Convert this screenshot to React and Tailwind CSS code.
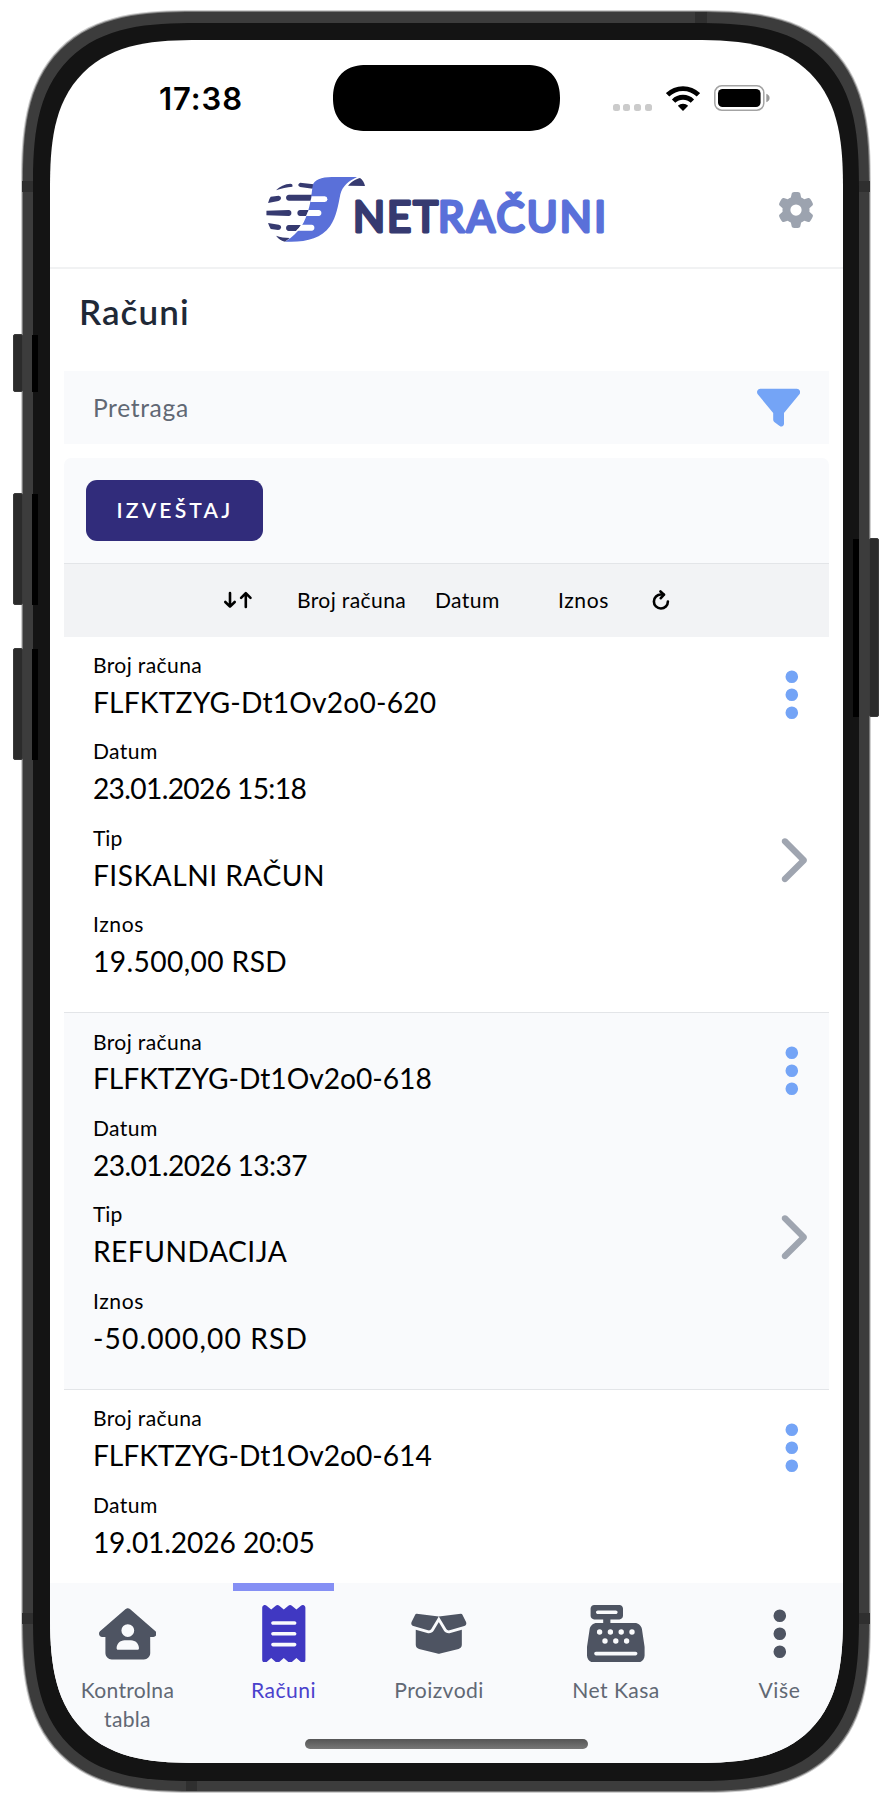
import {
  FaBoxOpen,
  FaCashRegister,
  FaChevronRight,
  FaEllipsisVertical,
  FaFilter,
  FaGear,
  FaHouseUser,
  FaReceipt,
} from "react-icons/fa6";

const receipts = [
  {
    fields: [
      { label: "Broj računa", value: "FLFKTZYG-Dt1Ov2o0-620", track: "tracking-[0.2px]", labelTrack: "tracking-[0.38px]" },
      { label: "Datum", value: "23.01.2026 15:18", track: "tracking-[-0.66px]", labelTrack: "tracking-[0.4px]" },
      { label: "Tip", value: "FISKALNI RAČUN", track: "tracking-[0.48px]", labelTrack: "tracking-[0.02px]" },
      { label: "Iznos", value: "19.500,00 RSD", track: "tracking-[0.4px]", labelTrack: "tracking-[0.6px]" },
    ],
    tone: "bg-white",
  },
  {
    fields: [
      { label: "Broj računa", value: "FLFKTZYG-Dt1Ov2o0-618", track: "tracking-[-0.02px]", labelTrack: "tracking-[0.38px]" },
      { label: "Datum", value: "23.01.2026 13:37", track: "tracking-[-0.6px]", labelTrack: "tracking-[0.4px]" },
      { label: "Tip", value: "REFUNDACIJA", track: "tracking-[0.5px]", labelTrack: "tracking-[0.02px]" },
      { label: "Iznos", value: "-50.000,00 RSD", track: "tracking-[1.11px]", labelTrack: "tracking-[0.6px]" },
    ],
    tone: "bg-[#f9fafc]",
  },
  {
    fields: [
      { label: "Broj računa", value: "FLFKTZYG-Dt1Ov2o0-614", track: "tracking-[-0.02px]", labelTrack: "tracking-[0.38px]" },
      { label: "Datum", value: "19.01.2026 20:05", track: "tracking-[-0.12px]", labelTrack: "tracking-[0.4px]" },
    ],
    tone: "bg-white",
  },
];

const tabs = [
  { label: "Kontrolna tabla", Icon: FaHouseUser, width: "w-[155px] px-7", tint: "text-[#4e5462]", text: "text-[#616874]", track: "tracking-[0.3px]" },
  { label: "Računi", Icon: FaReceipt, width: "w-[157px]", tint: "text-[#4038c2]", text: "text-[#4a41cc]", track: "tracking-[0.47px]", active: true },
  { label: "Proizvodi", Icon: FaBoxOpen, width: "w-[154px]", tint: "text-[#4e5462]", text: "text-[#616874]", track: "tracking-[0.42px]" },
  { label: "Net Kasa", Icon: FaCashRegister, width: "w-[200px]", tint: "text-[#4e5462]", text: "text-[#616874]", track: "tracking-[0.45px]" },
  { label: "Više", Icon: FaEllipsisVertical, width: "w-[127px]", tint: "text-[#4e5462]", text: "text-[#616874]", track: "tracking-[0.6px]" },
];

function StatusBar() {
  return (
    <div className="flex h-[116px] shrink-0 items-start pt-[25px]">
      <div className="flex h-[66px] w-[283px] items-center pl-[109px] pt-[2px] font-['Inter'] text-[31px] font-semibold tracking-[0.9px] text-black">
        17:38
      </div>
      <div className="h-[66px] w-[226.5px] rounded-[40px] bg-black [corner-shape:superellipse(1.2)]" />
      <div className="flex h-[66px] items-center pl-[53px]">
        <div className="flex gap-[3.8px] pt-[18px]">
          {[0, 1, 2, 3].map((n) => (
            <span key={n} className="size-[7px] rounded-[2.5px] bg-[#cbcbcb]" />
          ))}
        </div>
        <svg viewBox="0 0 34 25" className="ml-[14px] h-[25px] w-[34px]">
          <g fill="none" stroke="#000" strokeWidth="4.8">
            <path d="M1.6 8.9 A22 22 0 0 1 32.4 8.9" />
            <path d="M7.6 15.1 A13.4 13.4 0 0 1 26.4 15.1" />
          </g>
          <path d="M17 25 L11.8 19.8 A7.6 7.6 0 0 1 22.2 19.8Z" fill="#000" />
        </svg>
        <svg viewBox="0 0 56 26" className="ml-[14.5px] h-[26px] w-[56px]">
          <rect x="0.8" y="0.8" width="49" height="24.4" rx="7" fill="none" stroke="#a3a3a3" strokeWidth="1.5" />
          <rect x="4" y="4" width="42.6" height="18" rx="4.6" fill="#000" />
          <path d="M52.3 8.8 Q55.6 10 55.6 13 Q55.6 16 52.3 17.2Z" fill="#9a9a9a" />
        </svg>
      </div>
    </div>
  );
}

function Logo() {
  return (
    <svg viewBox="45 30 1060 205" className="h-[68.3px] w-[353.3px]">
      <g fill="#363a70">
        <path d="M78 76 C88 64 105 57 121 56 Q129 56 127 65 C110 67 95 69 78 76Z" />
        <path d="M150 53 L191 58 L188 71 L150 66 Q139 60 150 53Z" />
        <path d="M62 95 L86 92 Q94 94 93 100 Q92 106 85 108 L54 114 Q56 102 62 95Z" />
        <path d="M117 89 H186 L182 107 H117 Q108 106 108 98 Q108 90 117 89Z" />
        <path d="M49 137 L116 135 Q124 136 124 144 Q124 152 116 153 L49 151Z" />
        <path d="M150 135 H176 L169 153 H150 Q142 152 142 144 Q142 136 150 135Z" />
        <path d="M54 174 L86 179 Q94 181 93 188 Q91 195 84 195 L62 192 Q57 184 54 174Z" />
        <path d="M116 180 H153 Q146 192 138 198 H116 Q108 197 108 189 Q108 181 116 180Z" />
        <path d="M78 212 C90 217 105 218 119 219 L105 230 C95 228 85 222 78 212Z" />
        <path d="M294 62 C302 52 316 42 330 39 C338 44 343 54 345 63Z" />
      </g>
      <path
        d="M188 62 C190 45 215 36 245 36 L321 36 C295 49 278 62 271 88 C264 122 260 155 240 184 C212 222 165 233 105 230 C150 203 165 170 175 135 C184 105 184 85 188 62Z"
        fill="#5a70d9"
      />
      <g fill="#fff">
        <path d="M185 94 H224 Q232 95 232 102.5 Q232 110 224 111 H181Z" />
        <path d="M176 135 H206 Q214 136 214 144 Q214 152 206 153 H168Z" />
        <path d="M153 179 H185 Q193 180 193 188 Q193 196 185 197 H138 Q147 190 153 179Z" />
      </g>
      <g className="font-['Lato',sans-serif]" fontSize="126" strokeWidth="9.5" strokeLinejoin="round">
        <text x="309" y="202" letterSpacing="6" fill="#363a70" stroke="#363a70">NET</text>
        <text x="564" y="202" letterSpacing="6.8" fill="#5a70d9" stroke="#5a70d9">RAČUNI</text>
      </g>
    </svg>
  );
}

function SortBar() {
  return (
    <div className="flex h-[74px] shrink-0 items-center border-t-[1.5px] border-[#e3e5e8] bg-[#f2f3f5] pl-[159px] pt-[0.5px] text-[21.1px] leading-7 text-black">
      <svg viewBox="0 0 30 18" className="h-[18px] w-[30px]" fill="none" stroke="#000" strokeWidth="2.6" strokeLinecap="round" strokeLinejoin="round">
        <path d="M7 2 V15.5 M2.3 11 L7 15.7 L11.7 11" />
        <path d="M22.8 16 V2.5 M18.1 6.9 L22.8 2.2 L27.5 6.9" />
      </svg>
      <span className="ml-[43.5px] w-[138px] tracking-[0.38px]">Broj računa</span>
      <span className="w-[123px] tracking-[0.4px]">Datum</span>
      <span className="w-[94px] tracking-[0.6px]">Iznos</span>
      <svg viewBox="0 0 18 20" className="h-5 w-[18px]" fill="none" stroke="#000" strokeWidth="2.6" strokeLinecap="round" strokeLinejoin="round">
        <path d="M15.9 11.5 A7 7 0 1 1 9 4.5 H11.5" />
        <path d="M8.5 1.5 L12 4.7 L8.8 8.2" />
      </svg>
    </div>
  );
}

function ReceiptRow({ receipt }) {
  return (
    <div className={`flex h-[376.7px] shrink-0 justify-between border-b-[1.5px] border-[#e3e5e8] pl-[28.5px] pt-[14.5px] ${receipt.tone}`}>
      <dl className="flex flex-col gap-[13.4px] text-black">
        {receipt.fields.map((field) => (
          <div key={field.label}>
            <dt className={`text-[21.1px] leading-[28.8px] ${field.labelTrack}`}>{field.label}</dt>
            <dd className={`pt-px text-[28.2px] leading-[43.2px] ${field.track}`}>{field.value}</dd>
          </div>
        ))}
      </dl>
      <div className="flex w-[73px] flex-col items-center pt-[14.6px]">
        <FaEllipsisVertical className="size-[57.6px] shrink-0 text-[#74a4f6]" />
        <FaChevronRight className="mr-[1.5px] mt-[111.8px] size-[50.4px] shrink-0 text-[#9fa5b0]" />
      </div>
    </div>
  );
}

function TabBar() {
  return (
    <nav className="h-[180px] shrink-0 bg-[#f9fafc]">
      <div className="flex h-[156px]">
        {tabs.map(({ label, Icon, width, tint, text, track, active }) => (
          <div key={label} className={`flex shrink-0 flex-col items-center ${width}`}>
            <div className={`h-[7.5px] w-[101px] shrink-0 ${active ? "bg-[#858ff4]" : ""}`} />
            <Icon className={`mt-[14px] size-[57.6px] shrink-0 ${tint}`} />
            <span className={`mt-[14px] text-center text-[21.1px] leading-[28.8px] ${text} ${track}`}>{label}</span>
          </div>
        ))}
      </div>
      <div className="mx-auto h-[9.5px] w-[283px] rounded-full bg-linear-to-b from-[#555] to-[#777]" />
    </nav>
  );
}

function SideButton({ place }) {
  return <div className={`absolute w-[10px] rounded-[2px] border border-[#3a3a3a] bg-[#2b2b2b] ${place}`} />;
}

function Mark({ place }) {
  return <div className={`absolute ${place}`} />;
}

export default function App() {
  return (
    <main className="relative h-[1796px] w-[892px] overflow-hidden bg-white pl-[21px] pt-[10px] font-['Lato','Noto_Sans',sans-serif]">
      <SideButton place="left-[12.5px] top-[334px] h-[58px]" />
      <SideButton place="left-[12.5px] top-[493px] h-[112px]" />
      <SideButton place="left-[12.5px] top-[648px] h-[112px]" />
      <SideButton place="left-[869px] top-[538px] h-[179px]" />

      <div className="h-[1783px] w-[850px] rounded-[174px] bg-[#cfcfcf] p-px [corner-shape:superellipse(1.48)]">
        <div className="h-full rounded-[173px] bg-[#7c7c7c] p-px [corner-shape:superellipse(1.48)]">
          <div className="h-full rounded-[172px] bg-[#3c3c3c] px-[10px] pb-[10px] pt-[11px] [corner-shape:superellipse(1.48)]">
            <div className="h-full rounded-[164px] bg-[#141414] pb-[18px] pl-[17px] pr-[16px] pt-[17px] [corner-shape:superellipse(1.48)]">
              <div className="flex h-full flex-col overflow-hidden rounded-[150px] bg-white [corner-shape:superellipse(1.48)]">
                <StatusBar />
                <header className="flex h-[113px] shrink-0 items-start border-b-2 border-[#f1f2f3] pl-[215px] pt-[19px]">
                  <Logo />
                  <FaGear className="ml-[159.7px] mt-[16.5px] size-9 text-[#9ca3af]" />
                </header>
                <div className="flex min-h-0 flex-1 flex-col overflow-hidden px-[14.4px]">
                  <h1 className="h-[102px] shrink-0 pl-[14.5px] pt-[22px] text-[35px] font-semibold leading-[40px] tracking-[1.1px] text-[#1f2937]">
                    Računi
                  </h1>
                  <div className="flex h-[72.5px] shrink-0 items-center justify-between bg-[#f9fafc] pl-[28.5px] pr-[28.5px]">
                    <span className="pt-[2px] text-[24.6px] tracking-[0.65px] text-[#616874]">Pretraga</span>
                    <FaFilter className="size-[43.2px] text-[#74a4f6]" />
                  </div>
                  <section className="mt-[14.5px] flex flex-col overflow-hidden rounded-t-[7px]">
                    <div className="h-[104.5px] shrink-0 bg-[#f9fafc] pl-[21.6px] pt-[21.5px]">
                      <button className="flex h-[61px] w-[177px] items-center justify-center rounded-[11px] bg-[#312c7b] pl-[1px] text-[21.1px] font-semibold tracking-[3.17px] text-white">
                        IZVEŠTAJ
                      </button>
                    </div>
                    <SortBar />
                    {receipts.map((receipt) => (
                      <ReceiptRow key={receipt.fields[0].value} receipt={receipt} />
                    ))}
                  </section>
                </div>
                <TabBar />
              </div>
            </div>
          </div>
        </div>
      </div>

      <Mark place="left-[32px] top-[335px] h-[57px] w-[6px] bg-black" />
      <Mark place="left-[32px] top-[494px] h-[111px] w-[6px] bg-black" />
      <Mark place="left-[32px] top-[649px] h-[111px] w-[6px] bg-black" />
      <Mark place="left-[853px] top-[539px] h-[178px] w-[6px] bg-black" />
      <Mark place="left-[22px] top-[181px] h-[11px] w-[11px] bg-[#2f2f2f]" />
      <Mark place="left-[859px] top-[181px] h-[11px] w-[11px] bg-[#2f2f2f]" />
      <Mark place="left-[22px] top-[1613px] h-[11px] w-[11px] bg-[#2f2f2f]" />
      <Mark place="left-[859px] top-[1613px] h-[11px] w-[11px] bg-[#2f2f2f]" />
      <Mark place="left-[695px] top-[12px] h-[11px] w-[12px] bg-[#2f2f2f]" />
      <Mark place="left-[186px] top-[1781px] h-[10px] w-[11px] bg-[#2f2f2f]" />
    </main>
  );
}
